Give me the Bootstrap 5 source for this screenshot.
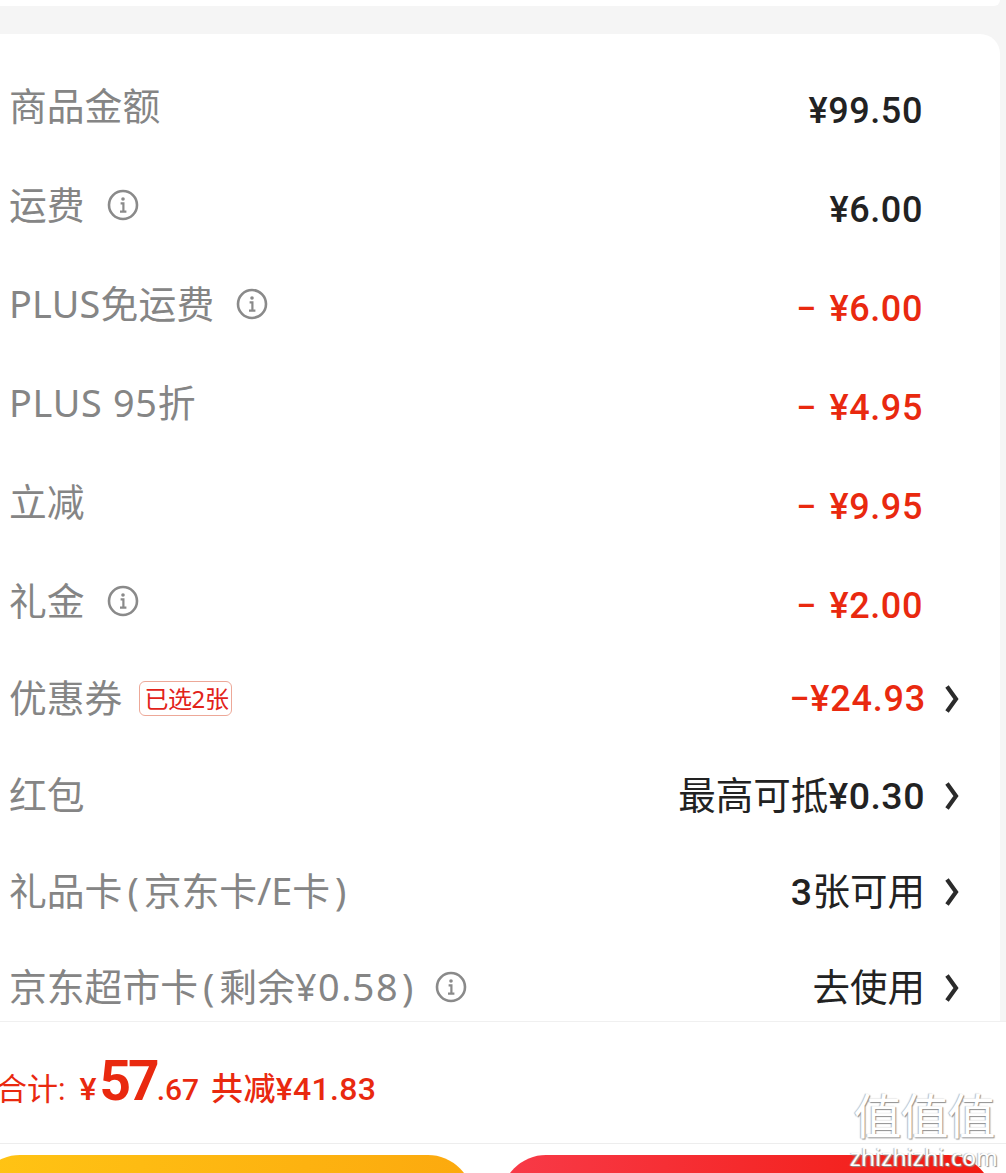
<!doctype html>
<html lang="zh-CN">
<head>
<meta charset="utf-8">
<title>结算</title>
<link rel="stylesheet" href="https://cdn.jsdelivr.net/npm/bootstrap@5.3.0/dist/css/bootstrap.min.css">
<style>
html,body{height:1173px;overflow:hidden}
body{background:#f5f5f5;position:relative;font-family:"Noto Sans","Noto Sans CJK SC",sans-serif}
.top-strip{height:6px;margin:0 6px 28px -20px;background:#fff;border-radius:0 0 16px 16px}
.fee-panel{height:987px;margin:0 6px 0 -20px;padding-left:29px;padding-top:52px;background:#fff;border-radius:20px 20px 0 0;overflow:hidden}
.fee-row{height:99px;padding-right:40px}
.fee-row.short{height:93.2px}
.fee-row.h97{height:97px}
.fee-row.h96{height:96px}
.fee-label{font-size:37.8px;line-height:50px;color:#858585;gap:22px;font-weight:400;margin-top:-5px}
.fee-label.latin{letter-spacing:.2px}
.fee-label.wide{letter-spacing:.7px}
.fee-label.low{margin-top:-1px}
.paren{padding:0 5px}
.paren.end{padding:0 0 0 3px}
.digits{letter-spacing:1.5px}
.fee-val{font-family:Roboto,"Noto Sans CJK SC",sans-serif;font-weight:500;font-size:36px;line-height:50px;color:#222;letter-spacing:.6px;margin-right:37px}
.fee-val.red{color:#e9290f;word-spacing:3px}
.fee-val.cjk{font-weight:400;font-size:37.5px;letter-spacing:0}
.cjk b{font-weight:500;letter-spacing:.5px}
.chev-wrap .fee-val{margin-right:0}
.chev-wrap .fee-val.red{letter-spacing:.8px;margin-right:-1px}
.chev{width:14px;height:30px;margin-left:20px;margin-right:1px;flex:none}
.info-ico{width:32px;height:32px;flex:none}
.tag-sel{font-size:24px;line-height:33px;height:35px;padding:0 2px 0 4px;color:#e2231a;border:1px solid #eda898;border-radius:6px;letter-spacing:-.4px;margin-left:-5px}
.foot{height:152px;background:#fff;border-top:1px solid #f0f0f0;overflow:hidden}
.total-bar{height:122px;border-bottom:1px solid #ededed;margin-left:-4px;padding-top:32px;color:#e9290f;font-family:Roboto,"Noto Sans CJK SC",sans-serif;white-space:nowrap}
.t-label{font-size:31px;font-weight:400}
.t-yen{font-size:32px;font-weight:500;margin-left:14px}
.t-big{font-size:55px;font-weight:700;line-height:1;letter-spacing:-3px;margin-left:3px}
.t-dec{font-size:30px;font-weight:500}
.t-cut{font-size:32px;font-weight:500;margin-left:12px;letter-spacing:.3px}
.act-row{padding-top:11px;gap:28px;margin:0 12px 0 -25px}
.act-btn{height:90px;border:0;border-radius:45px}
.act-y{width:498px;background:linear-gradient(90deg,#ffc414,#fca90e)}
.act-r{width:492px;background:linear-gradient(90deg,#f83a48,#f2190f)}
.wm{position:absolute;right:8px;bottom:4px;text-align:center;color:#fff;line-height:1;text-shadow:1px 1px 1px #8e8e8e,-1px 0 1px #bbb;pointer-events:none;font-family:"Noto Sans CJK SC",sans-serif}
.wm-cn{font-size:48px;line-height:48px;letter-spacing:-1px;font-weight:400;margin-bottom:8px}
.wm-en{font-size:23px;line-height:24px;font-family:"Noto Sans",sans-serif;letter-spacing:.2px}
</style>
</head>
<body>
<svg width="0" height="0" class="position-absolute">
<defs>
<symbol id="ii" viewBox="0 0 32 32"><circle cx="16" cy="16" r="14" fill="none" stroke="#8a8a8a" stroke-width="2.6"/><circle cx="16" cy="10" r="1.8" fill="#8a8a8a"/><path d="M13.6 14.4h2.8v8M13 22.6h6.4" fill="none" stroke="#8a8a8a" stroke-width="2.2"/></symbol>
<symbol id="cv" viewBox="0 0 14 30"><path d="M2 2.5 11 15 2 27.5" fill="none" stroke="#2b2b2b" stroke-width="4.2"/></symbol>
</defs>
</svg>
<div class="top-strip"></div>
<div class="fee-panel">
  <div class="fee-row d-flex justify-content-between align-items-start"><div class="fee-label d-flex align-items-center">商品金额</div><div class="fee-val">¥99.50</div></div>
  <div class="fee-row d-flex justify-content-between align-items-start"><div class="fee-label d-flex align-items-center">运费<svg class="info-ico"><use href="#ii"/></svg></div><div class="fee-val">¥6.00</div></div>
  <div class="fee-row d-flex justify-content-between align-items-start"><div class="fee-label latin d-flex align-items-center">PLUS免运费<svg class="info-ico"><use href="#ii"/></svg></div><div class="fee-val red">− ¥6.00</div></div>
  <div class="fee-row d-flex justify-content-between align-items-start"><div class="fee-label wide d-flex align-items-center">PLUS 95折</div><div class="fee-val red">− ¥4.95</div></div>
  <div class="fee-row d-flex justify-content-between align-items-start"><div class="fee-label d-flex align-items-center">立减</div><div class="fee-val red">− ¥9.95</div></div>
  <div class="fee-row short d-flex justify-content-between align-items-start"><div class="fee-label d-flex align-items-center">礼金<svg class="info-ico"><use href="#ii"/></svg></div><div class="fee-val red">− ¥2.00</div></div>
  <div class="fee-row h97 d-flex justify-content-between align-items-start"><div class="fee-label low d-flex align-items-center">优惠券<span class="tag-sel">已选2张</span></div><div class="chev-wrap d-flex align-items-center"><div class="fee-val red">−¥24.93</div><svg class="chev"><use href="#cv"/></svg></div></div>
  <div class="fee-row h96 d-flex justify-content-between align-items-start"><div class="fee-label low d-flex align-items-center">红包</div><div class="chev-wrap d-flex align-items-center"><div class="fee-val cjk">最高可抵<b>¥0.30</b></div><svg class="chev"><use href="#cv"/></svg></div></div>
  <div class="fee-row h96 d-flex justify-content-between align-items-start"><div class="fee-label low d-flex align-items-center"><span>礼品卡<span class="paren">(</span>京东卡/E卡<span class="paren">)</span></span></div><div class="chev-wrap d-flex align-items-center"><div class="fee-val cjk"><b>3</b>张可用</div><svg class="chev"><use href="#cv"/></svg></div></div>
  <div class="fee-row h96 d-flex justify-content-between align-items-start"><div class="fee-label low d-flex align-items-center"><span>京东超市卡<span class="paren">(</span>剩余<span class="digits">¥0.58</span><span class="paren end">)</span></span><svg class="info-ico"><use href="#ii"/></svg></div><div class="chev-wrap d-flex align-items-center"><div class="fee-val cjk">去使用</div><svg class="chev"><use href="#cv"/></svg></div></div>
</div>
<div class="foot">
  <div class="total-bar d-flex align-items-baseline"><span class="t-label">合计:</span><span class="t-yen">¥</span><span class="t-big">57</span><span class="t-dec">.67</span><span class="t-cut">共减¥41.83</span></div>
  <div class="act-row d-flex"><button type="button" class="btn act-btn act-y" aria-label="确认"></button><button type="button" class="btn act-btn act-r" aria-label="提交"></button></div>
</div>
<div class="wm"><div class="wm-cn">值值值</div><div class="wm-en">zhizhizhi.com</div></div>
</body>
</html>
